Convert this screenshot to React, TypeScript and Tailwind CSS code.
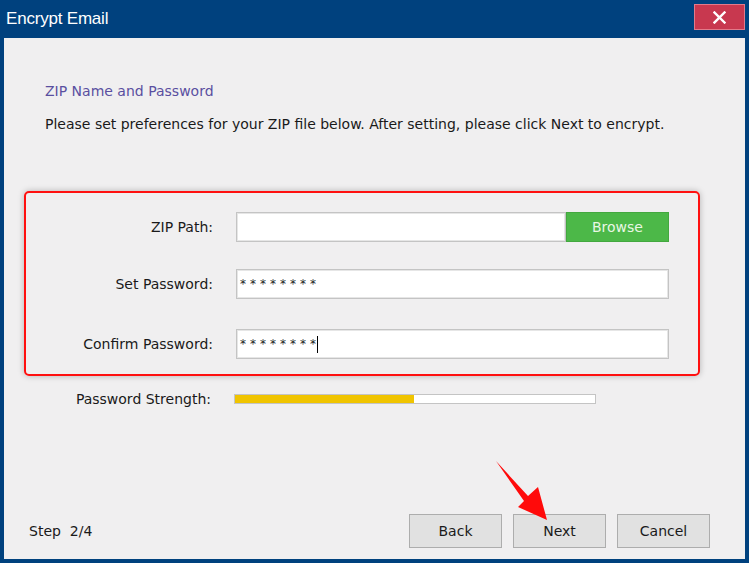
import React from 'react'

const font = { fontFamily: '"DejaVu Sans", Verdana, sans-serif' }

function Field({ label, value, cursor, browse }: { label: string; value?: string; cursor?: boolean; browse?: boolean }) {
  return (
    <div className="flex items-center h-[30px]">
      <div className="w-[187px] text-right text-[14px] text-[#1a1a1a]">{label}</div>
      <div className="ml-[23px] flex flex-1 h-[30px] mr-[29px]">
        <div className="flex-1 flex items-center bg-white border border-[#c4c4c4] shadow-[inset_0_0_0_1px_#e6e6e6] pl-[3px] text-[12px] tracking-[4px] text-[#222]">
          {value}
          {cursor && <span className="inline-block w-px h-[17px] bg-black -ml-[3px]" />}
        </div>
        {browse && (
          <button className="w-[103px] h-full bg-[#4cb848] border border-[#43a83f] text-[#e9f7e4] text-[14px]">Browse</button>
        )}
      </div>
    </div>
  )
}

function Btn({ children }: { children: React.ReactNode }) {
  return (
    <button className="w-[93px] h-[34px] bg-[#e1e1e1] border border-[#adadad] text-[14px] text-[#1a1a1a]">{children}</button>
  )
}

export default function App() {
  return (
    <div style={font} className="w-[749px] h-[563px] bg-[#00417e] flex flex-col overflow-hidden">
      <div className="h-[38px] flex items-start justify-between">
        <span
          style={{ fontFamily: '"Liberation Sans", Arial, sans-serif' }}
          className="ml-[6px] mt-[9px] text-[17px] leading-[20px] tracking-[-0.2px] text-white"
        >
          Encrypt Email
        </span>
        <button className="mt-[4px] mr-[4px] w-[51px] h-[26px] bg-[#c8384f] border border-[#e27a8a] flex items-center justify-center">
          <svg width="13" height="13" viewBox="0 0 13 13">
            <path d="M1.5 1.5 L11.5 11.5 M11.5 1.5 L1.5 11.5" stroke="white" strokeWidth="2.4" strokeLinecap="square" />
          </svg>
        </button>
      </div>

      <div className="flex-1 mx-[4px] mb-[4px] bg-[#f0eff0] relative flex flex-col">
        <div className="mt-[43px] ml-[41px] h-[20px] leading-[20px] text-[14px] text-[#5a4fa0]">ZIP Name and Password</div>
        <div className="mt-[13px] ml-[41px] h-[20px] leading-[20px] text-[14px] text-[#1a1a1a]">
          Please set preferences for your ZIP file below. After setting, please click Next to encrypt.
        </div>

        <div className="mt-[57px] ml-[20px] w-[676px] h-[185px] border-2 border-[#ff1010] rounded-[5px] shadow-[0_0_6px_rgba(0,0,0,0.25)] flex flex-col">
          <div className="mt-[19px]">
            <Field label="ZIP Path:" browse />
          </div>
          <div className="mt-[27px]">
            <Field label="Set Password:" value="********" />
          </div>
          <div className="mt-[30px]">
            <Field label="Confirm Password:" value="********" cursor />
          </div>
        </div>

        <div className="mt-[13px] ml-[20px] flex items-center h-[20px]">
          <div className="w-[187px] text-right text-[14px] text-[#1a1a1a]">Password Strength:</div>
          <div className="ml-[23px] w-[362px] h-[10px] bg-white border border-[#c4c4c4] flex">
            <div className="w-[179px] h-full bg-[#f0c400]" />
          </div>
        </div>

        <div className="mt-auto mb-[11px] flex items-center">
          <span className="ml-[25px] text-[14px] text-[#1a1a1a] whitespace-pre">Step  2/4</span>
          <div className="ml-auto mr-[35px] flex gap-[11px]">
            <Btn>Back</Btn>
            <Btn>Next</Btn>
            <Btn>Cancel</Btn>
          </div>
        </div>

        <svg className="absolute left-[490px] top-[421px]" width="60" height="65" viewBox="0 0 60 65">
          <polygon points="2,2 34,37 44,28 53,61 24,48 30,42" fill="#ff0a0a" />
        </svg>
      </div>
    </div>
  )
}
